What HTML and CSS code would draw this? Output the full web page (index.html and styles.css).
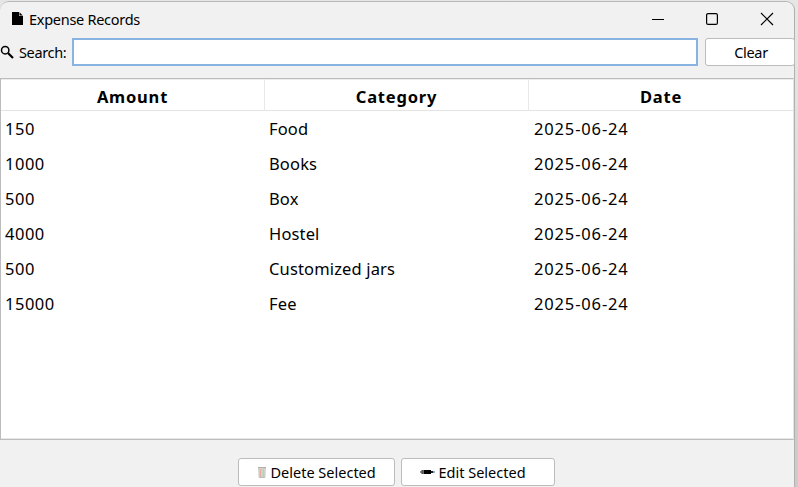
FILE: index.html
```html
<!DOCTYPE html>
<html lang="en">
<head>
<meta charset="utf-8">
<title>Expense Records</title>
<link rel="stylesheet" href="styles.css">
</head>
<body>
<main class="window">
  <header class="titlebar">
    <svg class="file-icon" width="11" height="14" viewBox="0 0 11 14"><path d="M0 0h7v4h4v9H0z"/><path d="M7.5.3 10.8 3.500H7.5z"/></svg>
    <h1 class="title">Expense Records</h1>
    <div class="controls">
      <svg width="12" height="14" viewBox="0 0 12 14"><path d="M0 7.5h12" stroke="#000" stroke-width="1"/></svg>
      <svg width="12" height="14" viewBox="0 0 12 14"><rect x=".6" y="1.6" width="10.8" height="10.8" rx="1.5" fill="none" stroke="#000" stroke-width="1.2"/></svg>
      <svg width="14" height="14" viewBox="0 0 14 14"><path d="M1 1l12 12M13 1L1 13" stroke="#000" stroke-width="1.2"/></svg>
    </div>
  </header>
  <div class="search-row">
    <svg class="search-icon" width="14" height="14" viewBox="0 0 14 14"><circle cx="5.2" cy="5.2" r="3.7" fill="none" stroke="#000" stroke-width="1.5"/><path d="M8 8l5 5" stroke="#000" stroke-width="2.2"/></svg>
    <label class="label" for="search">Search:</label>
    <input class="search-input" id="search" type="text">
    <button class="button clear"><span>Clear</span></button>
  </div>
  <table class="records">
    <thead><tr><th>Amount</th><th>Category</th><th>Date</th></tr></thead>
    <tbody>
      <tr><td>150</td><td>Food</td><td>2025-06-24</td></tr>
      <tr><td>1000</td><td>Books</td><td>2025-06-24</td></tr>
      <tr><td>500</td><td>Box</td><td>2025-06-24</td></tr>
      <tr><td>4000</td><td>Hostel</td><td>2025-06-24</td></tr>
      <tr><td>500</td><td>Customized jars</td><td>2025-06-24</td></tr>
      <tr><td>15000</td><td>Fee</td><td>2025-06-24</td></tr>
      <tr class="filler"><td></td><td></td><td></td></tr>
    </tbody>
  </table>
  <footer class="actions">
    <button class="button delete">
      <svg width="8" height="12" viewBox="0 0 8 12"><path d="M.8 2h6.4l-.4 9.5H1.2z" fill="#eee8e3" stroke="#bbb"/><path d="M2.4 3v8" stroke="#e3a798"/><path d="M4 3v8" stroke="#9bcba6"/><path d="M5.6 3v8" stroke="#b9c2da"/><path d="M0 1.500h8" stroke="#b5aca4"/></svg>
      <span>Delete Selected</span>
    </button>
    <button class="button edit">
      <svg width="15" height="6" viewBox="0 0 15 6"><path d="M0 3l1.500-1.600v3.200z" fill="#222"/><path d="M1.500 1h1.700v4H1.500z" fill="#57504a"/><path d="M3.500 1H11v4H3.500z"/><path d="M11 2h2.500v2H11z" fill="#222"/><path d="M13.500 2H15v2h-1.500z" fill="#8bb7dc"/></svg>
      <span>Edit Selected</span>
    </button>
  </footer>
</main>
</body>
</html>
```
FILE: styles.css
```css
* { box-sizing: border-box; }
body {
  margin: 0;
  height: 487px;
  overflow: hidden;
  padding-top: 1px;
  background: linear-gradient(#e6e6e6, #e0e0e0 25%, #cbcbcb 80%);
  color: #000;
  font: 14.5px/20px "Noto Sans", "Open Sans", sans-serif;
}
.window {
  width: 795px;
  height: 486px;
  display: flex;
  flex-direction: column;
  background: #f1f1f1;
  border-top: 1px solid #b8b8b8;
  border-right: 1px solid #b0b0b0;
  border-radius: 9px 9px 0 0;
}
.titlebar {
  height: 36px;
  display: flex;
  align-items: center;
  padding: 0 20px 2px 12px;
}
.title {
  margin: 0 0 0 6px;
  font-size: 14.5px;
  font-weight: 400;
  letter-spacing: -0.28px;
}
.controls {
  margin-left: auto;
  display: flex;
  gap: 42px;
}
.search-row {
  height: 28px;
  display: flex;
  align-items: center;
}
.search-row > * { flex-shrink: 0; }
.label {
  width: 53px;
  margin-left: 5px;
  letter-spacing: -0.35px;
}
.search-input {
  width: 626px;
  height: 28px;
  padding: 0 5px;
  border: 2px solid #89b3e0;
  outline: none;
  background: #fff;
  font: inherit;
}
.button {
  height: 28px;
  padding: 0;
  display: flex;
  align-items: center;
  border: 1px solid #bcbcbc;
  border-radius: 3px;
  background: #fff;
  color: #000;
  font: inherit;
}
.clear {
  width: 90px;
  margin-left: 7px;
  padding-left: 2px;
  justify-content: center;
  letter-spacing: -0.3px;
}
.records {
  width: 794px;
  height: 362px;
  margin-top: 12px;
  table-layout: fixed;
  border-collapse: separate;
  border-spacing: 0;
  background: #fff;
  border: 1px solid #bcbcbc;
  border-right-color: #e4e4e4;
  box-shadow: inset 0 -1px #e8e8e8, inset 0 1px #ececec;
  font-size: 16.5px;
}
th {
  height: 32px;
  padding: 4px 0 0;
  border-right: 1px solid #e8e8e8;
  border-bottom: 1px solid #e4e4e4;
  font-weight: 700;
  letter-spacing: 0.8px;
}
th:last-child { border-right: 0; }
td {
  height: 35px;
  padding: 1px 0 0 4px;
  letter-spacing: 0.5px;
}
td:nth-child(2) { letter-spacing: 0.15px; }
td:nth-child(3) {
  padding-left: 5px;
  letter-spacing: 0.85px;
}
.filler td { height: auto; }
.actions {
  display: flex;
  justify-content: center;
  gap: 6px;
  margin-top: 18px;
  padding-right: 2px;
}
.delete {
  width: 157px;
  padding-left: 19px;
  gap: 5px;
}
.edit {
  width: 154px;
  padding-left: 18px;
  gap: 4px;
}
```
